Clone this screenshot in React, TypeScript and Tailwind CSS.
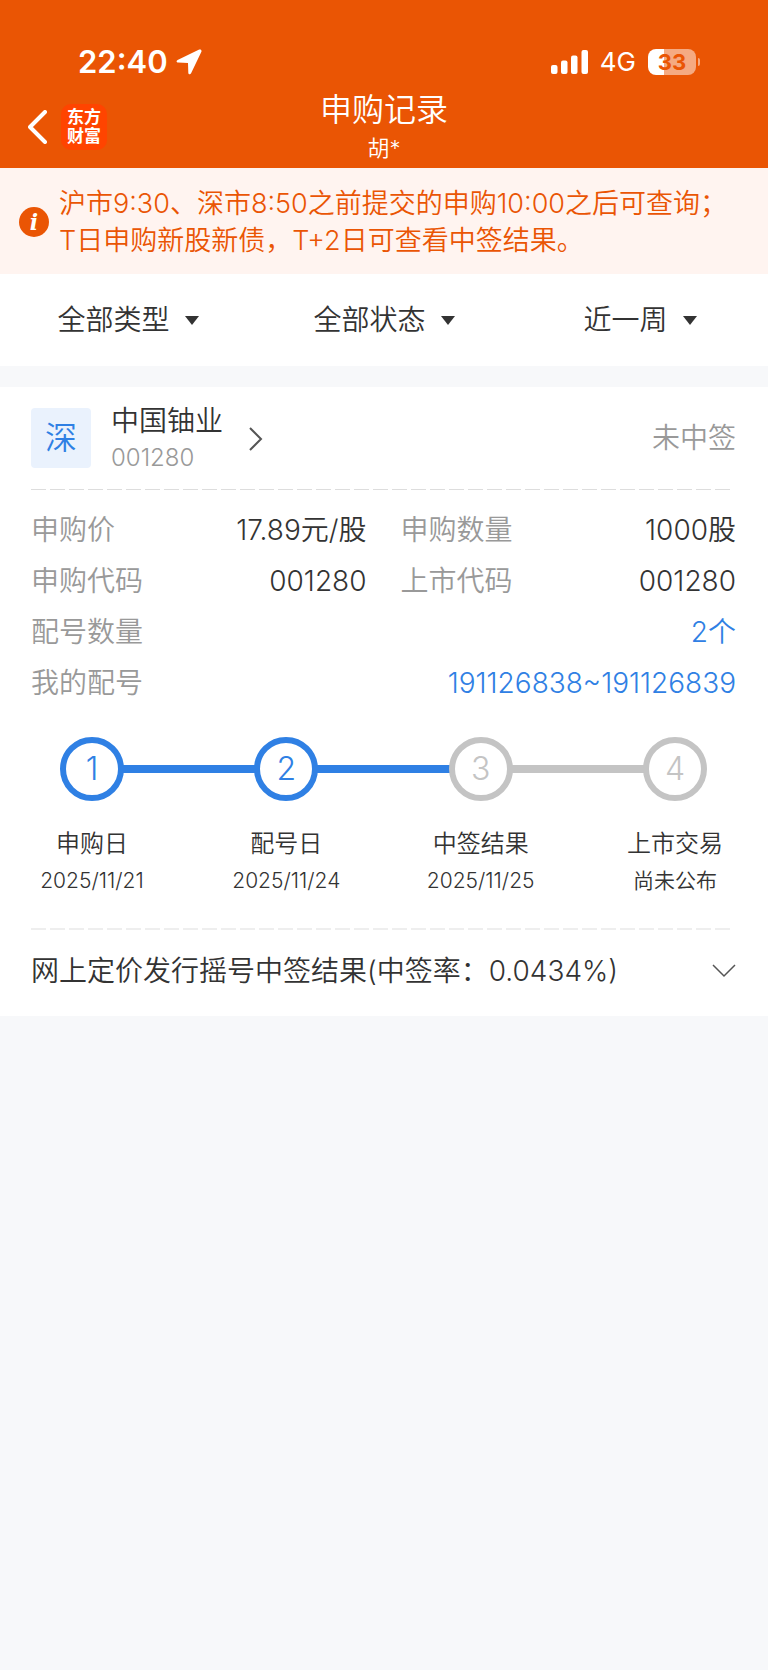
import React from 'react';

interface Step {
  title: string;
  date: string;
  done: boolean;
}

interface Filter {
  name: string;
  options: string[];
}

const filters: Filter[] = [
  { name: '类型', options: ['全部类型', '新股', '新债'] },
  { name: '状态', options: ['全部状态', '已中签', '未中签'] },
  { name: '时间', options: ['近一周', '近一月', '近一年'] },
];

const steps: Step[] = [
  { title: '申购日', date: '2025/11/21', done: true },
  { title: '配号日', date: '2025/11/24', done: true },
  { title: '中签结果', date: '2025/11/25', done: false },
  { title: '上市交易', date: '尚未公布', done: false },
];

const StatusBar = () => (
  <div className="flex h-10 items-center justify-between pl-[78px] pr-[68px]">
    <div className="flex items-center gap-2">
      <span className="text-[31px] font-semibold leading-10">22:40</span>
      <svg width="26" height="26" viewBox="0 0 26 26" fill="currentColor" aria-hidden="true">
        <path d="M23.2.6 1.6 10.9C0 11.7.3 13.5 2 13.6l10 .3.3 9.9c.1 1.8 2 2.1 2.8.5L25.4 2.7C26 1.2 24.7-.1 23.2.6Z" />
      </svg>
    </div>
    <div className="flex items-center gap-3">
      <svg width="37" height="24" viewBox="0 0 37 24" fill="currentColor" aria-hidden="true">
        <rect x="0" y="15" width="6.5" height="9" rx="2" />
        <rect x="10" y="10.5" width="6.5" height="13.5" rx="2" />
        <rect x="20" y="5.5" width="6.5" height="18.5" rx="2" />
        <rect x="30.5" y="0" width="6.5" height="24" rx="2" />
      </svg>
      <span className="text-[26px] leading-10">4G</span>
      <div className="flex items-center gap-0.5">
        <span className="flex h-[26px] w-12 items-center justify-center rounded-lg bg-linear-to-r from-white from-33% to-[#f5aa82] to-33% text-[22px] font-bold text-[#ea5504]">
          33
        </span>
        <span className="h-2 w-0.5 rounded-r-full bg-[#f5aa82]"></span>
      </div>
    </div>
  </div>
);

const Header = () => (
  <header className="bg-[#ea5504] pt-[42px] text-white">
    <StatusBar />
    <div className="grid h-[86px] grid-cols-[1fr_auto_1fr] items-center px-7 pt-1">
      <div className="flex items-center gap-[14px]">
        <button aria-label="返回">
          <svg width="19" height="34" viewBox="0 0 19 34" fill="none" stroke="currentColor" strokeWidth="4" strokeLinecap="round" strokeLinejoin="round">
            <path d="M17 2 2 17l15 15" />
          </svg>
        </button>
        <div className="flex size-[46px] flex-col items-center justify-center rounded-[10px] bg-[#ff4400] text-[17px] font-bold leading-[19px]">
          <span>东方</span>
          <span>财富</span>
        </div>
      </div>
      <div className="pt-0.5 text-center font-[350]">
        <h1 className="text-[32px] leading-10">申购记录</h1>
        <p className="text-[22px] leading-9">胡*</p>
      </div>
    </div>
  </header>
);

const Notice = () => (
  <div className="flex items-center gap-[10px] bg-[#fff4f0] pb-[15px] pl-[19px] pt-[17px] text-[#ea5504]">
    <span className="flex size-[30px] shrink-0 items-center justify-center rounded-full bg-[#ea5504] font-['DejaVu_Serif',serif] text-[22px] font-bold italic leading-none text-white">
      i
    </span>
    <p className="text-[27px] font-[350] leading-[37px]">
      沪市9:30、深市8:50之前提交的申购10:00之后可查询；
      <br />
      T日申购新股新债，T+2日可查看中签结果。
    </p>
  </div>
);

const FilterBar = () => (
  <div className="grid h-[92px] grid-cols-3 bg-white">
    {filters.map((filter) => (
      <label key={filter.name} className="flex items-center justify-center gap-[15px]">
        <select aria-label={filter.name} className="field-sizing-content appearance-none bg-transparent text-[28px] font-[350] leading-10">
          {filter.options.map((option) => (
            <option key={option}>{option}</option>
          ))}
        </select>
        <svg width="14" height="9" viewBox="0 0 14 9" fill="currentColor" aria-hidden="true">
          <path d="M0 0h14L7 9Z" />
        </svg>
      </label>
    ))}
  </div>
);

// Long dashes, a plain border-dashed is too short for this
const Divider = ({ className }: { className: string }) => (
  <div
    className={`bg-[repeating-linear-gradient(to_right,currentColor_0_15px,transparent_15px_19px)] ${className}`}
  ></div>
);

interface FieldProps {
  label: string;
  value: string;
  wide?: boolean;
}

const Field: React.FC<FieldProps> = ({ label, value, wide = false }) => (
  <div className={wide ? 'col-span-2 flex justify-between text-[#2f80e4]' : 'flex justify-between'}>
    <dt className="text-[#999999]">{label}</dt>
    <dd>{value}</dd>
  </div>
);

const Progress = () => (
  <div>
    <div className="flex items-center px-[30px]">
      {steps.map((step, i) => (
        <React.Fragment key={step.title}>
          {i > 0 && (
            <div className={steps[i - 1].done ? 'h-2 flex-1 bg-[#2f80e4]' : 'h-2 flex-1 bg-[#c4c4c4]'}></div>
          )}
          <div
            className={`-mx-px flex size-16 items-center justify-center rounded-full border-6 text-[32px] font-light ${
              step.done ? 'border-[#2f80e4] text-[#2f80e4]' : 'border-[#c4c4c4] text-[#c4c4c4]'
            }`}
          >
            {i + 1}
          </div>
        </React.Fragment>
      ))}
    </div>
    <ol className="mt-6 flex justify-between">
      {steps.map((step) => (
        <li key={step.title} className="w-[122px] whitespace-nowrap text-center font-[350]">
          <p className="text-[24px] leading-[38px]">{step.title}</p>
          <p className="text-[21px] leading-9">{step.date}</p>
        </li>
      ))}
    </ol>
  </div>
);

const RecordCard = () => (
  <section className="mt-[21px] bg-white pl-[31px] pr-8">
    <div className="flex h-[102px] items-center">
      <span className="flex size-[60px] items-center justify-center rounded bg-[#eaf2fd] text-[32px] font-[350] text-[#2f80e4]">
        深
      </span>
      <button className="ml-5 flex items-center gap-[26px] pt-0.5 text-left">
        <span className="flex flex-col">
          <span className="text-[28px] font-[350] leading-[38px]">中国铀业</span>
          <span className="text-[24px] font-light leading-9 text-[#999999]">001280</span>
        </span>
        <svg width="14" height="24" viewBox="0 0 14 24" fill="none" stroke="#555555" strokeWidth="2" aria-hidden="true">
          <path d="m1 1 11 11L1 23" />
        </svg>
      </button>
      <span className="ml-auto text-[28px] font-[350] text-[#999999]">未中签</span>
    </div>
    <Divider className="mr-1 h-px text-[#dddddd]" />
    <dl className="mt-[15px] grid grid-cols-2 gap-x-[34px] text-[28px] font-[350] leading-[51px]">
      <Field label="申购价" value="17.89元/股" />
      <Field label="申购数量" value="1000股" />
      <Field label="申购代码" value="001280" />
      <Field label="上市代码" value="001280" />
      <Field label="配号数量" value="2个" wide />
      <Field label="我的配号" value="191126838~191126839" wide />
    </dl>
    <div className="mt-7">
      <Progress />
    </div>
    <Divider className="mr-1 mt-[29px] h-0.5 text-[#eeeeee]" />
    <button className="flex h-[86px] w-full items-center justify-between pb-1 text-left text-[28px] font-[350]">
      <span>网上定价发行摇号中签结果(中签率：0.0434%)</span>
      <svg width="24" height="14" viewBox="0 0 24 14" fill="none" stroke="#555555" strokeWidth="1.5" aria-hidden="true">
        <path d="m1 1 11 11L23 1" />
      </svg>
    </button>
  </section>
);

const App = () => {
  return (
    <div
      lang="zh-CN"
      className="min-h-screen bg-[#f7f8fa] font-[Inter,'Noto_Sans_CJK_SC',sans-serif] text-[#333333]"
    >
      <Header />
      <Notice />
      <FilterBar />
      <RecordCard />
    </div>
  );
};

export default App;
